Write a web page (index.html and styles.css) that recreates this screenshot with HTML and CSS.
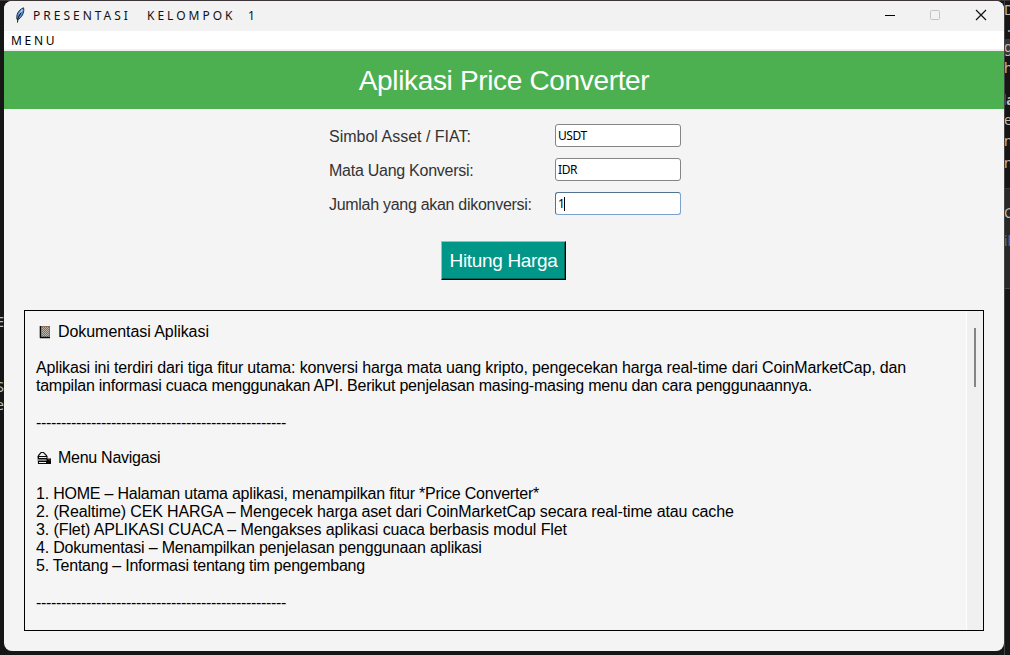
FILE: index.html
```html
<!DOCTYPE html>
<html lang="id">
<head>
<meta charset="utf-8">
<title>PRESENTASI KELOMPOK 1</title>
<link rel="stylesheet" href="styles.css">
</head>
<body>
<div class="backdrop" aria-hidden="true">
  <div class="strip strip-top"></div>
  <div class="side-panel"></div>
  <div class="glyphs right">
    <span class="frag" style="top:2px">D</span>
    <span class="frag dot" style="top:19px">.</span>
    <span class="frag hl" style="top:39px">g</span>
    <span class="frag" style="top:60px">h</span>
    <span class="frag bold" style="top:92px">la</span>
    <span class="frag" style="top:112px">e</span>
    <span class="frag" style="top:133px">n</span>
    <span class="frag" style="top:155px">n</span>
    <span class="frag" style="top:205px">C</span>
    <span class="frag blue" style="top:233px">il</span>
  </div>
  <div class="glyphs left">
    <span class="frag" style="top:314px">E</span>
    <span class="frag" style="top:379px">S</span>
    <span class="frag" style="top:397px">e</span>
  </div>
</div>
<main class="window">
  <header class="titlebar">
    <svg class="feather" width="12" height="16" viewBox="0 0 12 16"><path d="M3 12.500C2 8 4 3 9.500.8C10.500 4 9 9 5 12Z" fill="#4f8fe0" stroke="#20262e" stroke-width=".9"/><path d="M8.500 2.500L5.500 7" stroke="#b8dcff" stroke-width="1.300"/><path d="M3.500 15.500L4 11L7 5.500" fill="none" stroke="#111"/></svg>
    <div class="title"><span>PRESENTASI</span><span>KELOMPOK</span><span>1</span></div>
    <svg class="controls" width="104" height="12" viewBox="0 0 104 12"><path d="M0 6.500H10" stroke="#000"/><rect x="45.500" y="1.500" width="9" height="9" rx="1" fill="none" stroke="#c3c3c3"/><path d="M91 1L101 11M101 1L91 11" stroke="#111" stroke-width="1.200"/></svg>
  </header>
  <nav class="menubar"><span>MENU</span></nav>
  <h1 class="banner"><span>Aplikasi Price Converter</span></h1>
  <form class="form">
    <label class="f1" for="asset">Simbol Asset / FIAT:</label><div class="field" id="asset">USDT</div>
    <label class="f2" for="fiat">Mata Uang Konversi:</label><div class="field" id="fiat">IDR</div>
    <label class="f3" for="amount">Jumlah yang akan dikonversi:</label><div class="field focus" id="amount"><span class="num">1</span><i class="caret"></i></div>
  </form>
  <button class="submit" type="button">Hitung Harga</button>
  <section class="docs">
    <div class="text">
      <p class="line"><svg class="icon" width="22" height="18" viewBox="0 0 22 18"><path d="M4 3H14V15H4Z" fill="#b9b3ae"/><path d="M6.500 4V14M8.500 4V14M10.500 4V14M12.500 4V14" stroke="#3f7fae" stroke-dasharray="1 1"/><path d="M7.500 5V14M9.500 5V14M11.500 5V14" stroke="#a3693f" stroke-dasharray="1 1"/><path d="M4.500 3V15M4 14.500H14" fill="none" stroke="#080808" stroke-width="1.600"/><path d="M13.500 3V14M5 3.500H14" stroke="#8b5a34" stroke-width=".8"/></svg><span class="t1">Dokumentasi Aplikasi</span></p>
      <p class="line"></p>
      <p class="line t2">Aplikasi ini terdiri dari tiga fitur utama: konversi harga mata uang kripto, pengecekan harga real-time dari CoinMarketCap, dan</p>
      <p class="line t3">tampilan informasi cuaca menggunakan API. Berikut penjelasan masing-masing menu dan cara penggunaannya.</p>
      <p class="line"></p>
      <p class="line dash">--------------------------------------------------</p>
      <p class="line"></p>
      <p class="line"><svg class="icon" width="22" height="18" viewBox="0 0 22 18"><path d="M2.500 8V6.500L5 3.500H7.500L10.500 6.500V8" fill="none" stroke="#111" stroke-width="1.200"/><path d="M1.500 7H11.500V9.500H15V15H2Z" fill="#080808"/><path d="M3 8.500H10.500M2 11H10.500M3 13.500H10" stroke="#eee"/><path d="M12 9.500L14 11.500" stroke="#8d572f"/></svg><span class="t4">Menu Navigasi</span></p>
      <p class="line"></p>
      <p class="line t5">1. HOME – Halaman utama aplikasi, menampilkan fitur *Price Converter*</p>
      <p class="line t6">2. (Realtime) CEK HARGA – Mengecek harga aset dari CoinMarketCap secara real-time atau cache</p>
      <p class="line t7">3. (Flet) APLIKASI CUACA – Mengakses aplikasi cuaca berbasis modul Flet</p>
      <p class="line t8">4. Dokumentasi – Menampilkan penjelasan penggunaan aplikasi</p>
      <p class="line t9">5. Tentang – Informasi tentang tim pengembang</p>
      <p class="line"></p>
      <p class="line dash">--------------------------------------------------</p>
    </div>
    <div class="scrollbar"><div class="thumb"></div></div>
  </section>
</main>
</body>
</html>
```
FILE: styles.css
```css
* { box-sizing: border-box; }
body { margin: 0; width: 1010px; height: 655px; padding: 1px 6px 4px 4px; overflow: hidden; background: #161616; position: relative; font-family: "Liberation Sans", Arial, sans-serif; }
.backdrop { position: absolute; inset: 0; overflow: hidden; }
.strip-top { height: 1px; background: #3c3639; }
.side-panel { position: absolute; left: 1004px; top: 188px; width: 6px; height: 101px; background: #282828; border-top: 1px solid #3a3a3a; border-bottom: 1px solid #444; }
.glyphs { position: absolute; top: 0; bottom: 0; overflow: hidden; }
.glyphs.right { left: 1004px; right: 0; border-left: 1px solid #444; }
.glyphs.left { left: 0; width: 4px; }
.frag { position: absolute; font: 14px/16px "Noto Sans", sans-serif; color: #bdbdbd; white-space: nowrap; }
.right .frag { left: -1px; }
.left .frag { right: 0; }
.right .dot { left: 2px; }
.right .hl { background: #383838; }
.bold { font-weight: 700; }
.right .bold { left: -3px; }
.frag.blue { color: #48769c; }
.window { position: relative; z-index: 2; width: 1000px; height: 650px; border-radius: 8px; overflow: hidden; background: #f4f4f4; display: flex; flex-direction: column; }
.titlebar { height: 30px; background: #f2f2f2; display: flex; align-items: center; flex: none; padding: 0 15px 2px 10px; }
.feather { margin-right: 7px; flex: none; }
.title { display: flex; flex: 1; font: 12px/16px "Noto Sans", sans-serif; letter-spacing: 3px; color: #111; padding-top: 1px; }
.title span:nth-child(1) { width: 114px; }
.title span:nth-child(2) { width: 101px; }
.controls { flex: none; }
.menubar { height: 20px; flex: none; background: #fff; border-bottom: 2px solid #f0f0f0; font: 12px/19px "Noto Sans", sans-serif; letter-spacing: 2.7px; padding-left: 7px; color: #000; }
.banner { margin: 0; height: 58px; flex: none; background: #4caf50; color: #fff; font-size: 28px; line-height: 59px; font-weight: 400; text-align: center; letter-spacing: -.34px; }
.form { margin: 15px 0 0 325px; display: grid; grid-template-columns: 226px 126px; grid-auto-rows: 23px; row-gap: 11px; }
label { font-size: 16px; line-height: 26px; color: #333; white-space: nowrap; }
.f2 { letter-spacing: -.26px; }
.f3 { letter-spacing: -.29px; }
.field { display: flex; align-items: center; height: 23px; border: 1px solid #858585; border-radius: 3px; background: #fff; padding: 0 2px; font: 12px/20px "Noto Sans", sans-serif; letter-spacing: -.4px; color: #000; }
.field.focus { border-color: #7da2ce; border-top-color: #517390; border-left-color: #517390; }
.caret { width: 1px; height: 14px; background: #000; }
.submit { margin: 26px 0 0 437px; width: 125px; height: 39px; padding: 0; flex: none; border: 1px solid; border-color: #80cbc4 #000 #000 #80cbc4; box-shadow: inset -1px -1px #006157; background: #009688; color: #fff; font: 19px/35px "Liberation Sans", Arial, sans-serif; letter-spacing: -.33px; white-space: nowrap; }
.docs { margin: 30px 0 0 20px; width: 960px; height: 321px; flex: none; border: 1px solid #000; background: #f5f5f5; display: flex; justify-content: space-between; }
.text { padding: 12px 0 0 11px; font-size: 16px; color: #000; }
.line { margin: 0; height: 18px; line-height: 18px; white-space: pre; display: flex; }
.icon { flex: none; }
.t1 { letter-spacing: -.06px; }
.t2 { letter-spacing: -.152px; }
.t3 { letter-spacing: -.238px; }
.t4 { letter-spacing: -.27px; }
.t5 { letter-spacing: -.21px; }
.t6 { letter-spacing: -.13px; }
.t7 { letter-spacing: -.1px; }
.t8 { letter-spacing: -.195px; }
.t9 { letter-spacing: -.235px; }
.dash { letter-spacing: -.328px; line-height: 20px; }
.scrollbar { width: 17px; flex: none; background: #f0f0f0; border-left: 1px solid #fff; padding: 17px 0 0 7px; }
.thumb { width: 2px; height: 59px; background: #858585; }
```
